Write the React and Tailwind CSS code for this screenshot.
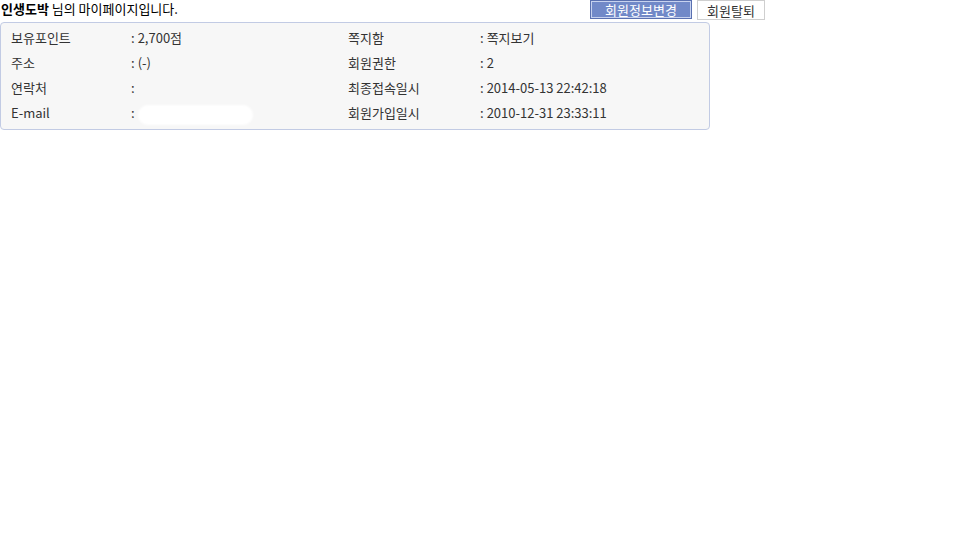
const rows = [
  { l1: '보유포인트', v1: '2,700점', l2: '쪽지함', v2: '쪽지보기' },
  { l1: '주소', v1: '(-)', l2: '회원권한', v2: '2' },
  { l1: '연락처', v1: '', l2: '최종접속일시', v2: '2014-05-13 22:42:18' },
  { l1: 'E-mail', v1: null, l2: '회원가입일시', v2: '2010-12-31 23:33:11' },
]

const App = () => {
  return (
    <div
      className="w-[960px] h-[540px] bg-white text-[13px] text-[#333]"
      style={{ fontFamily: '"Noto Sans CJK KR", "Noto Sans", sans-serif' }}
    >
      <div className="flex items-start w-[765px] h-[22px]">
        <div className="pl-[1px] text-[13px] leading-[18px] text-black">
          <b className="font-bold">인생도박</b> 님의 마이페이지입니다.
        </div>
        <div className="ml-auto flex gap-[5px]">
          <button className="w-[102px] h-[19px] border border-[#5a70b0] bg-[#7189c8] p-0">
            <span className="flex items-center justify-center w-full h-full border border-[#c7d2ef] text-white text-[13px] leading-none">
              회원정보변경
            </span>
          </button>
          <button className="w-[68px] h-[20px] border border-[#cfcfcf] bg-white text-[#333] text-[13px] leading-none">
            회원탈퇴
          </button>
        </div>
      </div>
      <div className="w-[710px] border border-[#c2cbe4] rounded-[4px] bg-[#f7f7f7] pt-[2px] pb-[4px] pl-[10px]">
        {rows.map((r, i) => (
          <div key={i} className="flex items-center h-[25px] leading-none">
            <div className="w-[120px]">{r.l1}</div>
            <div className="w-[217px] flex items-center relative">
              <span>:</span>
              {r.v1 === null ? (
                <span className="absolute left-[7px] top-[-1px] w-[115px] h-[20px] bg-white rounded-[10px] blur-[1px]" />
              ) : (
                <span className="ml-[3px]">{r.v1}</span>
              )}
            </div>
            <div className="w-[132px]">{r.l2}</div>
            <div className="flex items-center">
              <span>:</span>
              <span className="ml-[3px]">{r.v2}</span>
            </div>
          </div>
        ))}
      </div>
    </div>
  )
}

export default App
